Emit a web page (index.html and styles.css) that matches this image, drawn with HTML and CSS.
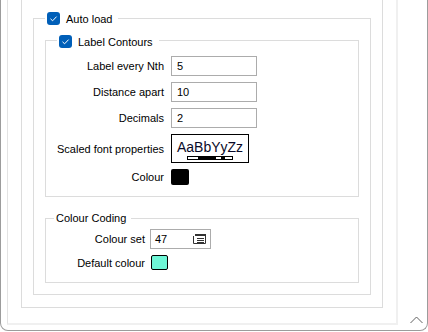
FILE: index.html
```html
<!DOCTYPE html>
<html lang="en">
<head>
  <meta charset="UTF-8">
  <title>Contour labels</title>
  <link rel="stylesheet" href="styles.css">
</head>
<body>
  <div class="window">
    <div class="viewport">
      <div class="panel">
        <div class="box">

          <!-- Auto load -->
          <div class="group outer">
            <div class="legend">
              <svg class="check" width="13" height="13" viewBox="0 0 13 13"><rect width="13" height="13" rx="3" fill="#005fb8"/><path d="M3.5 6.8 L5.6 8.8 L9.6 4.6" fill="none" stroke="#fff" stroke-width="1"/></svg>
              <span>Auto load</span>
            </div>

            <!-- Label Contours -->
            <div class="group contours">
              <div class="legend">
                <svg class="check" width="13" height="13" viewBox="0 0 13 13"><rect width="13" height="13" rx="3" fill="#005fb8"/><path d="M3.5 6.8 L5.6 8.8 L9.6 4.6" fill="none" stroke="#fff" stroke-width="1"/></svg>
                <span>Label Contours</span>
              </div>
              <div class="form">
                <label>Label every Nth</label>
                <div class="field">5</div>
                <label>Distance apart</label>
                <div class="field">10</div>
                <label>Decimals</label>
                <div class="field">2</div>
                <label>Scaled font properties</label>
                <div class="font-box">
                  <span>AaBbYyZz</span>
                  <svg width="46" height="4" viewBox="0 0 46 4"><rect x="0.5" y="0.5" width="45" height="3" fill="#fff" stroke="#000"/><rect x="11" y="1" width="18" height="2" fill="#000"/><rect x="34" y="1" width="4" height="2" fill="#000"/></svg>
                </div>
                <label>Colour</label>
                <div class="swatch black"></div>
              </div>
            </div>

            <!-- Colour Coding -->
            <div class="group coding">
              <div class="legend plain">Colour Coding</div>
              <div class="form narrow">
                <label>Colour set</label>
                <div class="field picker">
                  <span>47</span>
                  <svg width="13" height="10" viewBox="0 0 13 10"><path d="M0.5 2 V9.5 H12.5 V0.5 H2.5" fill="none" stroke="#333"/><rect x="2" y="0" width="11" height="2" fill="#333"/><path d="M4 4.5 H11 M4 6.5 H11 M4 8.5 H11" stroke="#333"/></svg>
                </div>
                <label>Default colour</label>
                <div class="swatch aqua"></div>
              </div>
            </div>
          </div>

        </div>
      </div>
    </div>
    <div class="scrollbar">
      <svg width="13" height="8" viewBox="0 0 13 8"><path d="M0.5 7 L6.5 1 L12.5 7" fill="none" stroke="#606060"/></svg>
    </div>
  </div>
</body>
</html>
```

FILE: styles.css
```css
body {
  margin: 0;
  background: #fff;
  font-family: "Liberation Sans", Arial, sans-serif;
  font-size: 11px;
  color: #000;
}

/* Outer frame */
.window {
  display: flex;
  width: 428px;
  height: 331px;
  box-sizing: border-box;
  border: 1px solid #9c9c9c;
  border-top: none;
  border-radius: 0 0 8px 8px;
  background: #fff;
}

.viewport {
  width: 397px;
  padding: 0 0 5px 6px;
  box-sizing: border-box;
  display: flex;
  flex-direction: column;
}

.panel {
  flex: 1;
  border-left: 1px solid #e3e3e3;
  border-right: 2px solid #f0f0f0;
  border-bottom: 2px solid #f0f0f0;
  display: flex;
  flex-direction: column;
}

.box {
  margin: 0 13px 15px 13px;
  border: 1px solid #dcdcdc;
  border-top: none;
  padding-bottom: 12px;
}

.scrollbar {
  flex: 1;
  display: flex;
  align-items: flex-end;
  justify-content: flex-end;
  padding: 0 4px 6px 0;
}

/* Group boxes */
.group {
  border: 1px solid #dcdcdc;
  margin: 0 11px;
}

.outer {
  margin-top: 18px;
  padding-bottom: 11px;
}

.contours {
  margin-top: 15px;
}

.coding {
  margin-top: 21px;
}

.legend {
  display: flex;
  align-items: center;
  gap: 6px;
  width: fit-content;
  height: 13px;
  margin: -7px 0 0 11px;
  padding: 0 6px 0 2px;
  background: #fff;
}

.contours .legend {
  margin-top: -6px;
}

.check {
  display: block;
}

.legend.plain {
  height: 15px;
  line-height: 15px;
  margin: -8px 0 0 8px;
  padding: 0 5px 0 2px;
}

/* Label / value rows */
.form {
  display: grid;
  grid-template-columns: 118px auto;
  column-gap: 7px;
  row-gap: 6px;
  align-items: center;
  justify-items: start;
  margin-top: 8px;
  padding-bottom: 11px;
}

.form label {
  justify-self: end;
}

.form.narrow {
  grid-template-columns: 99px auto;
  column-gap: 5px;
  margin-top: 3px;
  padding-bottom: 12px;
}

.field {
  width: 86px;
  height: 20px;
  box-sizing: border-box;
  border: 1px solid #acacac;
  padding-left: 5px;
  display: flex;
  align-items: center;
}

.picker {
  width: 61px;
  padding: 0 4px 0 4px;
  justify-content: space-between;
}

.picker svg {
  display: block;
}

.font-box {
  width: 78px;
  height: 29px;
  box-sizing: border-box;
  border: 1px solid #000;
  display: flex;
  flex-direction: column;
  align-items: center;
  padding-top: 4px;
}

.font-box span {
  font-size: 14px;
  line-height: 16px;
  color: #0a0a28;
}

.font-box svg {
  display: block;
  margin-top: 1px;
}

.swatch {
  border-radius: 2px;
  box-sizing: border-box;
}

.swatch.black {
  width: 18px;
  height: 16px;
  background: #000;
}

.swatch.aqua {
  width: 17px;
  height: 15px;
  margin-left: 1px;
  background: #6ef6d6;
  border: 1px solid #000;
}
```
